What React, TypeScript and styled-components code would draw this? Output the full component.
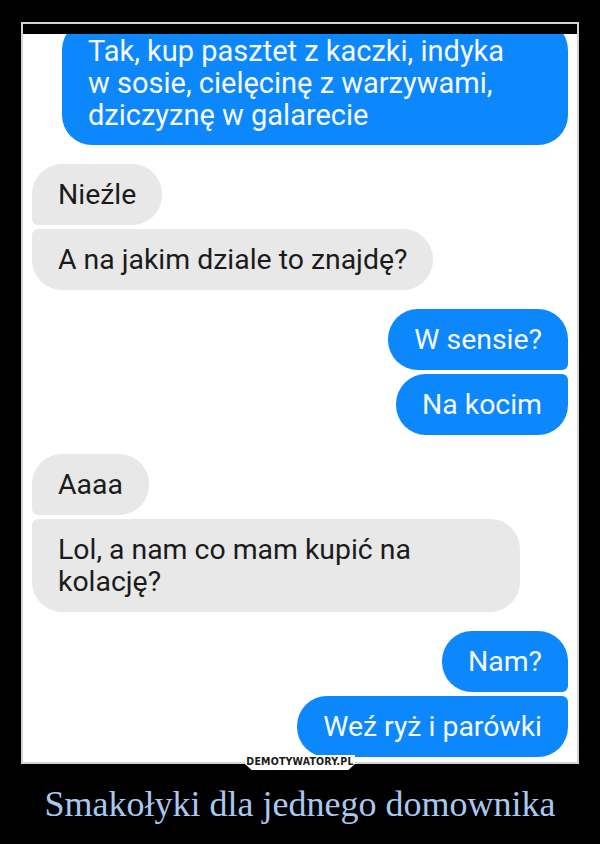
import React from "react";
import styled, { createGlobalStyle, css } from "styled-components";

const GlobalStyle = createGlobalStyle`
  html, body {
    margin: 0;
    padding: 0;
    background: #000;
  }
  * { box-sizing: border-box; }
`;

const Page = styled.div`
  width: 600px;
  height: 844px;
  background: #000;
  display: flex;
  flex-direction: column;
  align-items: center;
  padding-top: 22px;
  overflow: hidden;
`;

const Frame = styled.div`
  position: relative;
  width: 558px;
  height: 742px;
  border: 2px solid #d4d4d4;
  display: flex;
  flex-direction: column;
  background: #fff;
`;

const StatusStrip = styled.div`
  height: 10px;
  background: #000;
  flex: none;
`;

const Chat = styled.div`
  flex: 1;
  overflow: hidden;
  background: #fff;
  display: flex;
  flex-direction: column;
  gap: 19px;
  padding: 0 9px 5px 9px;
`;

type Side = "in" | "out";
type Pos = "single" | "first" | "last";

const Group = styled.div<{ $side: Side; $cropped?: boolean }>`
  display: flex;
  flex-direction: column;
  gap: 4px;
  align-items: ${(p) => (p.$side === "out" ? "flex-end" : "flex-start")};
  ${(p) => p.$cropped && css`margin-top: -14px;`}
`;

const BIG = 30;
const SMALL = 6;

const radius = (side: Side, pos: Pos) => {
  const inner = (top: boolean) => {
    if (pos === "single") return BIG;
    if (pos === "first") return top ? BIG : SMALL;
    return top ? SMALL : BIG;
  };
  // order: top-left top-right bottom-right bottom-left
  if (side === "in") {
    return `${inner(true)}px ${BIG}px ${BIG}px ${inner(false)}px`;
  }
  return `${BIG}px ${inner(true)}px ${inner(false)}px ${BIG}px`;
};

const Bubble = styled.div<{ $side: Side; $pos: Pos; $width?: number; $size?: number }>`
  font-family: Roboto, "Noto Sans", sans-serif;
  font-size: ${(p) => p.$size ?? 28.4}px;
  line-height: 32px;
  padding: 14.5px 26px;
  white-space: nowrap;
  border-radius: ${(p) => radius(p.$side, p.$pos)};
  width: ${(p) => (p.$width ? `${p.$width}px` : "fit-content")};
  background: ${(p) => (p.$side === "out" ? "#0d87fc" : "#e8e8e8")};
  color: ${(p) => (p.$side === "out" ? "#f6f9ff" : "#1b1b1b")};
`;

const Badge = styled.div`
  position: absolute;
  left: 50%;
  bottom: -8px;
  transform: translateX(-50%);
  width: 110px;
  height: 15px;
  background: #fff;
  clip-path: polygon(0 0, 100% 0, 100% 60%, 94% 100%, 6% 100%, 0 60%);
  display: flex;
  align-items: flex-start;
  justify-content: center;
  padding-top: 1px;
  font-family: "DejaVu Sans Condensed", "DejaVu Sans", sans-serif;
  font-weight: bold;
  font-size: 10.5px;
  line-height: 11px;
  letter-spacing: 0.2px;
  color: #1a1a1a;
`;

const Caption = styled.div`
  margin-top: 19px;
  font-family: "Liberation Serif", "Times New Roman", serif;
  font-size: 36px;
  color: #a9c7ef;
  text-align: center;
  width: 100%;
`;

export default function App() {
  return (
    <>
      <GlobalStyle />
      <Page>
        <Frame>
          <StatusStrip />
          <Chat>
            <Group $side="out" $cropped>
              <Bubble $side="out" $pos="single" $width={506} $size={29}>
                Tak, kup pasztet z kaczki, indyka
                <br />w sosie, cielęcinę z warzywami,
                <br />dziczyznę w galarecie
              </Bubble>
            </Group>
            <Group $side="in">
              <Bubble $side="in" $pos="first">Nieźle</Bubble>
              <Bubble $side="in" $pos="last">A na jakim dziale to znajdę?</Bubble>
            </Group>
            <Group $side="out">
              <Bubble $side="out" $pos="first">W sensie?</Bubble>
              <Bubble $side="out" $pos="last">Na kocim</Bubble>
            </Group>
            <Group $side="in">
              <Bubble $side="in" $pos="first">Aaaa</Bubble>
              <Bubble $side="in" $pos="last" $width={488}>
                Lol, a nam co mam kupić na
                <br />
                kolację?
              </Bubble>
            </Group>
            <Group $side="out">
              <Bubble $side="out" $pos="first">Nam?</Bubble>
              <Bubble $side="out" $pos="last">Weź ryż i parówki</Bubble>
            </Group>
          </Chat>
          <Badge>DEMOTYWATORY.PL</Badge>
        </Frame>
        <Caption>Smakołyki dla jednego domownika</Caption>
      </Page>
    </>
  );
}
